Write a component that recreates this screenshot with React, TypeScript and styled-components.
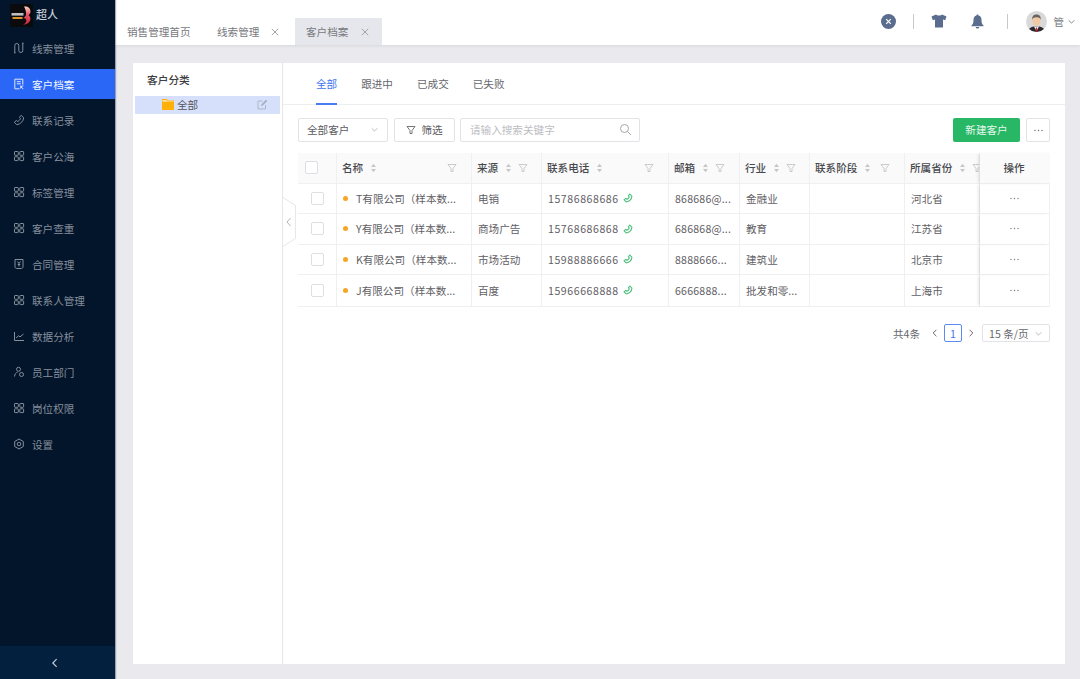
import React from "react";
import styled, { createGlobalStyle } from "styled-components";

const Global = createGlobalStyle`
  html, body { margin: 0; padding: 0; height: 100%; }
  body { font-family: "Noto Sans CJK SC", "Noto Sans", sans-serif; background: #e9e9ee; overflow: hidden; }
  * { box-sizing: border-box; }
`;

const Page = styled.div`display: flex; width: 1080px; height: 679px;`;
const Side = styled.aside`
  width: 115px; flex: none; background: #02152b; display: flex; flex-direction: column;
  box-shadow: 1px 0 1px rgba(60,70,90,.45); z-index: 3;
`;
const Brand = styled.div`display: flex; align-items: center; height: 33px; padding: 0 0 2px 10px; gap: 3px;`;
const BrandName = styled.span`color: #c9ced6; font-size: 11px; font-weight: 500; margin-bottom: 3px;`;
const Menu = styled.nav`flex: 1; display: flex; flex-direction: column; gap: 6px;`;
const MenuItem = styled.div<{ $active?: boolean }>`
  height: 30px; display: flex; align-items: center; padding-left: 13px; gap: 7px;
  font-size: 10.6px;
  color: ${p => (p.$active ? "#f2f6ff" : "#868f9b")};
  background: ${p => (p.$active ? "#2b67f6" : "transparent")};
  svg { flex: none; }
`;
const Collapse = styled.div`height: 33px; background: #04203f; display: flex; align-items: center; justify-content: center; padding-right: 5px;`;

const Main = styled.div`flex: 1; display: flex; flex-direction: column; min-width: 0;`;
const Header = styled.header`
  height: 45px; flex: none; background: #fff; display: flex; align-items: flex-end; padding-left: 1px;
  box-shadow: 0 1px 3px rgba(0,0,0,.08); position: relative; z-index: 2;
`;
const HeadTab = styled.div<{ $active?: boolean; $w: number }>`
  width: ${p => p.$w}px; height: 27px; display: flex; align-items: center; padding-left: 11px;
  font-size: 10.6px; color: #77797e; background: ${p => (p.$active ? "#e6e7ec" : "transparent")};
`;
const TabClose = styled.span<{ $r: number }>`margin-left: auto; margin-right: ${p => p.$r}px; display: flex;`;
const HeadRight = styled.div`margin-left: auto; height: 100%; display: flex; align-items: center; padding: 0 4px 3px 0;`;
const HeadSep = styled.i<{ $l: number }>`width: 1px; height: 15px; background: #c6c8cc; display: block; margin-left: ${p => p.$l}px;`;
const HeadIcon = styled.span<{ $l: number }>`display: flex; margin-left: ${p => p.$l}px;`;
const UserName = styled.span`font-size: 10.5px; color: #77797e; margin-left: 7px;`;

const Content = styled.main`flex: 1; padding: 18px 15px 15px 18px; display: flex; min-height: 0;`;
const Card = styled.section`flex: 1; background: #fff; display: flex; position: relative;`;
const Tree = styled.div`width: 150px; flex: none; border-right: 1px solid #e6e7eb; padding: 9px 2px 0;`;
const TreeTitle = styled.div`font-size: 10.7px; font-weight: 500; color: #3e3e42; padding-left: 12px; height: 16px; line-height: 16px;`;
const TreeRow = styled.div`
  margin-top: 8px; height: 18px; background: #d6e0fa; display: flex; align-items: center; padding: 0 12px 1px 27px;
  font-size: 10.6px; color: #55565b; gap: 3px;
`;
const EditWrap = styled.span`margin-left: auto; display: flex;`;
const Handle = styled.div`position: absolute; left: 150px; top: 134px; width: 14px; height: 50px; display: flex;`;

const Panel = styled.div`flex: 1; min-width: 0; display: flex; flex-direction: column;`;
const Tabs = styled.div`height: 42px; flex: none; border-bottom: 1px solid #eceef1; display: flex; padding-left: 33px; gap: 24px;`;
const PTab = styled.div<{ $active?: boolean }>`
  height: 42px; padding-top: 13px; font-size: 10.6px; line-height: 16px;
  color: ${p => (p.$active ? "#3e74f0" : "#66676c")};
  border-bottom: ${p => (p.$active ? "2px solid #4a7bf2" : "none")};
`;
const Body = styled.div`padding: 13px 15px 0; flex: 1;`;
const Toolbar = styled.div`display: flex; align-items: center; height: 24px; gap: 6px; width: 752px;`;
const Control = styled.div<{ $w: number }>`
  width: ${p => p.$w}px; height: 24px; border: 1px solid #e2e3e6; border-radius: 2px; background: #fff;
  display: flex; align-items: center; font-size: 10.6px; color: #5b5c61; padding-bottom: 1px;
`;
const SelectBox = styled(Control)`padding-left: 8px; padding-right: 8px; justify-content: space-between;`;
const FilterBtn = styled(Control)`justify-content: center; gap: 5px;`;
const SearchBox = styled(Control)`padding-left: 9px; padding-right: 7px; justify-content: space-between; color: #bcbdc1; margin-left: -1px;`;
const Green = styled.div`
  margin-left: auto; width: 67px; height: 24px; background: #27b765; color: #e6f7ee; border-radius: 2px; padding-bottom: 1px;
  display: flex; align-items: center; justify-content: center; font-size: 10.6px;
`;
const MoreBtn = styled(Control)`justify-content: center; padding-bottom: 0;`;

const Table = styled.div`
  margin-top: 11px; width: 752px; display: grid; grid-template-columns: 39px 135px 70px 127px 71px 70px 95px 75px 70px;
  grid-template-rows: 31px 30px 31px 30px 31px; border-bottom: 1px solid #eeeff1; border-right: 1px solid #f0f0f2;
`;
const HCell = styled.div<{ $sticky?: boolean; $center?: boolean; $check?: boolean }>`
  background: #fafafa; border-right: 1px solid #f0f0f2; border-bottom: 1px solid #f0f0f2;
  display: flex; align-items: center; padding: 0 14px 1px 5px; font-size: 10.6px; font-weight: 500; color: #48494e; overflow: hidden; white-space: nowrap;
  ${p => p.$center && "justify-content: center; padding: 0 2px 1px 0;"}
  ${p => p.$check && "padding-left: 7px;"}
  ${p => p.$sticky && "box-shadow: -3px 0 3px -1px rgba(0,0,0,.09); position: relative; border-right: none;"}
`;
const Cell = styled.div<{ $sticky?: boolean; $center?: boolean; $last?: boolean }>`
  border-right: 1px solid #f0f0f2; border-bottom: ${p => (p.$last ? "none" : "1px solid #f0f0f2")};
  display: flex; align-items: center; padding: 0 5px 1px 6px; font-size: 10.6px; color: #5f6065; white-space: nowrap; overflow: hidden;
  ${p => p.$center && "justify-content: center; padding: 0 0 1px;"}
  ${p => p.$sticky && "box-shadow: -3px 0 3px -1px rgba(0,0,0,.09); position: relative; border-right: none; padding-right: 2px;"}
`;
const Check = styled.span`width: 13px; height: 13px; border: 1px solid #dedfe3; border-radius: 2px; background: #fff; display: block; flex: none;`;
const Dot = styled.i`width: 5px; height: 5px; border-radius: 50%; background: #f5a623; margin: 0 8px 0 0; display: block; flex: none;`;
const Sort = styled.span`margin-left: 7px; display: flex; flex: none;`;
const Funnel = styled.span<{ $auto?: boolean }>`
  display: flex; flex: none; margin-left: ${p => (p.$auto ? "auto" : "6px")};
`;
const Digits = styled.span`letter-spacing: .55px;`;
const MailText = styled.span`letter-spacing: .2px;`;
const CallIcon = styled.span`display: flex; margin-left: 4px;`;
const Pager = styled.div`margin-top: 17px; display: flex; align-items: center; justify-content: flex-end; height: 18px; font-size: 10.6px; color: #66676c; width: 752px;`;
const PageNum = styled.div`
  width: 18px; height: 18px; border: 1px solid #5d8bf4; border-radius: 2px; color: #3e74f0;
  display: flex; align-items: center; justify-content: center; margin: 0 4px;
`;
const PageSize = styled.div`
  width: 68px; height: 18px; border: 1px solid #e2e3e6; border-radius: 2px; margin-left: 6px; padding: 0 6px;
  display: flex; align-items: center; justify-content: space-between;
`;
const Arrow = styled.span`display: flex; margin-left: 10px;`;
const ArrowR = styled.span`display: flex;`;

type P = { c?: string };
const S = { width: 12, height: 12, viewBox: "0 0 12 12", fill: "none", strokeWidth: 1 };
const PHONE = "M8.200 1.300 10.700 3.800C10.300 7.400 7.400 10.300 3.800 10.700L1.300 8.200 3.300 6.500 4.800 7.500C5.800 7 7 5.800 7.500 4.800L6.500 3.300Z";
const IcGrid = ({ c = "#868f9b" }: P) => (
  <svg {...S} stroke={c}><rect x="1.500" y="1.500" width="3.800" height="3.800" rx=".6"/><rect x="6.800" y="1.500" width="3.800" height="3.800" rx=".6"/><rect x="1.500" y="6.800" width="3.800" height="3.800" rx=".6"/><rect x="6.800" y="6.800" width="3.800" height="3.800" rx=".6"/></svg>
);
const IcRoute = ({ c = "#868f9b" }: P) => (
  <svg {...S} stroke={c}><path d="M1.800 10.800V3.500a2 2 0 0 1 4 0V8.500a2 2 0 0 0 4 0V1.200"/><path d="M1 10.800h1.600M9 1.200h1.600"/></svg>
);
const IcBook = ({ c = "#868f9b" }: P) => (
  <svg {...S} stroke={c}><path d="M6.500 10.800H1.800V1.200h8V6.500"/><path d="M3.800 3.700h4M3.800 5.800h4M7.800 7.500v3M7.800 9l2.500-1.500M7.800 9l2.500 1.800"/></svg>
);
const IcPhone = ({ c = "#868f9b" }: P) => <svg {...S} stroke={c}><path d={PHONE}/></svg>;
const IcContract = ({ c = "#868f9b" }: P) => (
  <svg {...S} stroke={c}><path d="M2 1.500h8v7.200c0 1-.7 1.800-1.700 1.800H3.700C2.700 10.500 2 9.700 2 8.700z"/><path d="M4.500 3.500 6 5.500l1.500-2M6 5.500V8.500M4.700 6.500h2.600"/></svg>
);
const IcChart = ({ c = "#868f9b" }: P) => (
  <svg {...S} stroke={c}><path d="M1.500 2v8.500H11"/><path d="M3.200 8l2.300-2.300 1.500 1.200L10.500 4"/></svg>
);
const IcUsers = ({ c = "#868f9b" }: P) => (
  <svg {...S} stroke={c}><circle cx="5.500" cy="3.300" r="2"/><path d="M1.500 10.500c.3-2.500 1.500-4 3-4.300"/><circle cx="8.500" cy="8.500" r="2"/></svg>
);
const IcGear = ({ c = "#868f9b" }: P) => (
  <svg {...S} stroke={c}><path d="M6 1l4.300 2.500v5L6 11 1.700 8.500v-5z"/><circle cx="6" cy="6" r="1.800"/></svg>
);
const Chev = ({ dir = "down", c = "#b5b6ba", s = 9 }: { dir?: string; c?: string; s?: number }) => {
  const d = dir === "down" ? "M2 4l3.500 3.500L9 4" : dir === "left" ? "M7 2 3.500 5.500 7 9" : "M4 2l3.500 3.500L4 9";
  return <svg width={s} height={s} viewBox="0 0 11 11" fill="none" stroke={c} strokeWidth="1.100"><path d={d}/></svg>;
};
const X = () => <svg width="8" height="8" viewBox="0 0 8 8" stroke="#9a9ca2" strokeWidth=".9"><path d="M.8.8l6.400 6.400M7.200.8.8 7.200"/></svg>;
const FunnelIc = ({ c = "#c4c5c9" }: P) => <svg width="10" height="10" viewBox="0 0 10 10" fill="none" stroke={c} strokeWidth=".9"><path d="M1 1.500h8L6 5.500v3H4v-3z"/></svg>;
const SortIc = () => <svg width="7" height="10" viewBox="0 0 7 10" fill="#c6c7cb"><path d="M3.500.8 6 4H1zM3.500 9.200 1 6h5z"/></svg>;
const Dots = ({ c = "#66676c" }: P) => <svg width="9" height="3" viewBox="0 0 9 3" fill={c}><circle cx="1" cy="1.500" r=".7"/><circle cx="4.500" cy="1.500" r=".7"/><circle cx="8" cy="1.500" r=".7"/></svg>;
const PhoneG = () => <svg width="10" height="10" viewBox="0 0 12 12" fill="none" stroke="#4cbf7c" strokeWidth="1.300"><path d={PHONE}/></svg>;
const Logo = () => (
  <svg width="23" height="23" viewBox="0 0 23 23">
    <defs>
      <linearGradient id="lg" x1="0" y1="0" x2="0" y2="1"><stop offset="0" stopColor="#f7d8c4"/><stop offset=".45" stopColor="#e8556a"/><stop offset="1" stopColor="#c9243a"/></linearGradient>
    </defs>
    <rect width="23" height="23" fill="#0b0a0d"/>
    <rect x="1.500" y="9" width="12" height="2.600" fill="#bdbdbd"/>
    <rect x="2.500" y="13" width="10" height="2" fill="#d9932b"/>
    <path d="M14 2.500c3.500-.5 6.500 1.500 6.500 5 0 2-1 3-2 3.700 1.500 1 2.300 2.500 1.800 4.500-.7 3-3.700 5-7.300 4.800 2.500-1 3.700-2.700 3.300-4.500-.3-1.300-1.500-2-3-2 1.500-1 3-2.400 2.800-4.500C16 7 15.300 5 14 2.500z" fill="url(#lg)"/>
  </svg>
);
const Avatar = () => (
  <svg width="21" height="21" viewBox="0 0 21 21">
    <defs><clipPath id="av"><circle cx="10.500" cy="10.500" r="10.500"/></clipPath></defs>
    <g clipPath="url(#av)">
      <rect width="21" height="21" fill="#d9d9d9"/>
      <path d="M2 21c.5-4 3-5 6-5.500h5c3 .5 5.500 1.500 6 5.500z" fill="#2a2a2e"/>
      <path d="M8 15.500h5L10.500 20z" fill="#f4f4f4"/>
      <path d="M10 16.500h1l.4 4.500h-1.800z" fill="#c8202c"/>
      <ellipse cx="10.500" cy="9.500" rx="4" ry="5.200" fill="#f2c9a5"/>
      <path d="M6.300 9c-.5-4 1.500-5.500 4.200-5.500s4.700 1.500 4.200 5.500c-.4-2-1.200-2.800-4.200-2.800S6.700 7 6.300 9z" fill="#6a6460"/>
    </g>
  </svg>
);
const Shirt = () => <svg width="16" height="14" viewBox="0 0 16 14" fill="#5a6d8f"><path d="M5 .5C6 1.800 10 1.800 11 .5l4.500 2-1.300 3.800-2.200-.8V13.500H4V5.500l-2.200.8L.5 2.500z"/></svg>;
const Bell = () => <svg width="13" height="15" viewBox="0 0 13 15" fill="#5a6d8f"><path d="M6.500.5c.6 0 1 .4 1 1 2 .5 3 2 3 4.500 0 3 .7 4.200 2 5.500v.7H.5v-.7c1.300-1.300 2-2.500 2-5.500 0-2.500 1-4 3-4.500 0-.6.400-1 1-1zM4.800 13h3.400c0 1-.8 1.500-1.700 1.500S4.800 14 4.800 13z"/></svg>;
const CloseCircle = () => <svg width="15" height="15" viewBox="0 0 15 15"><circle cx="7.500" cy="7.500" r="7.500" fill="#5a6d8f"/><path d="M5.200 5.200l4.600 4.600M9.800 5.200l-4.600 4.600" stroke="#fff" strokeWidth="1.200"/></svg>;
const Search = () => <svg width="13" height="13" viewBox="0 0 13 13" fill="none" stroke="#a5a6aa" strokeWidth="1"><circle cx="5.500" cy="5.500" r="4"/><path d="M8.500 8.500l3.500 3.500"/></svg>;
const Edit = () => <svg width="11" height="11" viewBox="0 0 11 11" fill="none" stroke="#b0b6c8" strokeWidth="1"><path d="M8.500 6v4H1V2h4.500"/><path d="M4.500 6.500 5 5l4-4 1 1-4 4z" fill="#b0b6c8"/></svg>;
const Folder = () => <svg width="12" height="11" viewBox="0 0 12 11"><path d="M0 0h5l1 1.500h6V11H0z" fill="#ffb10a"/><path d="M.6 1h4.300l.7 1.200H11.400v.5H.6z" fill="#ffe3a8"/></svg>;
const HandleShape = () => (
  <svg width="14" height="50" viewBox="0 0 14 50" fill="#fff" stroke="#e6e7eb"><path d="M0 .5 12.500 8.500V41.500L0 49.500"/><path d="M7.500 21 4 25l3.500 4" fill="none" stroke="#b5b6ba"/></svg>
);

const menu: [string, React.FC<P>][] = [
  ["线索管理", IcRoute], ["客户档案", IcBook], ["联系记录", IcPhone], ["客户公海", IcGrid], ["标签管理", IcGrid], ["客户查重", IcGrid],
  ["合同管理", IcContract], ["联系人管理", IcGrid], ["数据分析", IcChart], ["员工部门", IcUsers], ["岗位权限", IcGrid], ["设置", IcGear],
];
const rows = [
  ["T有限公司（样本数...", "电销", "15786868686", "868686@...", "金融业", "", "河北省"],
  ["Y有限公司（样本数...", "商场广告", "15768686868", "686868@...", "教育", "", "江苏省"],
  ["K有限公司（样本数...", "市场活动", "15988886666", "8888666...", "建筑业", "", "北京市"],
  ["J有限公司（样本数...", "百度", "15966668888", "6666888...", "批发和零...", "", "上海市"],
];

export default function App() {
  return (
    <Page>
      <Global />
      <Side>
        <Brand><Logo /><BrandName>超人</BrandName></Brand>
        <Menu>
          {menu.map(([t, I], i) => (
            <MenuItem key={t} $active={i === 1}><I c={i === 1 ? "#dce6ff" : "#868f9b"} />{t}</MenuItem>
          ))}
        </Menu>
        <Collapse><Chev dir="left" c="#c3cad6" s={12} /></Collapse>
      </Side>
      <Main>
        <Header>
          <HeadTab $w={90}>销售管理首页</HeadTab>
          <HeadTab $w={89}>线索管理<TabClose $r={16}><X /></TabClose></HeadTab>
          <HeadTab $active $w={87}>客户档案<TabClose $r={13}><X /></TabClose></HeadTab>
          <HeadRight>
            <CloseCircle />
            <HeadSep $l={17} />
            <HeadIcon $l={17}><Shirt /></HeadIcon>
            <HeadIcon $l={24}><Bell /></HeadIcon>
            <HeadSep $l={23} />
            <HeadIcon $l={18}><Avatar /></HeadIcon>
            <UserName>管</UserName>
            <HeadIcon $l={3}><Chev c="#77797e" /></HeadIcon>
          </HeadRight>
        </Header>
        <Content>
          <Card>
            <Tree>
              <TreeTitle>客户分类</TreeTitle>
              <TreeRow><Folder />全部<EditWrap><Edit /></EditWrap></TreeRow>
            </Tree>
            <Handle><HandleShape /></Handle>
            <Panel>
              <Tabs>
                <PTab $active>全部</PTab><PTab>跟进中</PTab><PTab>已成交</PTab><PTab>已失败</PTab>
              </Tabs>
              <Body>
                <Toolbar>
                  <SelectBox $w={90}>全部客户<Chev /></SelectBox>
                  <FilterBtn $w={61}><FunnelIc c="#66676c" />筛选</FilterBtn>
                  <SearchBox $w={180}>请输入搜索关键字<Search /></SearchBox>
                  <Green>新建客户</Green>
                  <MoreBtn $w={24}><Dots /></MoreBtn>
                </Toolbar>
                <Table>
                  <HCell $check><Check /></HCell>
                  <HCell>名称<Sort><SortIc /></Sort><Funnel $auto><FunnelIc /></Funnel></HCell>
                  <HCell>来源<Sort><SortIc /></Sort><Funnel><FunnelIc /></Funnel></HCell>
                  <HCell>联系电话<Sort><SortIc /></Sort><Funnel $auto><FunnelIc /></Funnel></HCell>
                  <HCell>邮箱<Sort><SortIc /></Sort><Funnel><FunnelIc /></Funnel></HCell>
                  <HCell>行业<Sort><SortIc /></Sort><Funnel><FunnelIc /></Funnel></HCell>
                  <HCell>联系阶段<Sort><SortIc /></Sort><Funnel $auto><FunnelIc /></Funnel></HCell>
                  <HCell>所属省份<Sort><SortIc /></Sort><Funnel><FunnelIc /></Funnel></HCell>
                  <HCell $sticky $center>操作</HCell>
                  {rows.map((r, i) => {
                    const last = i === rows.length - 1;
                    return (
                      <React.Fragment key={r[0]}>
                        <Cell $last={last} $center><Check /></Cell>
                        <Cell $last={last}><Dot />{r[0]}</Cell>
                        <Cell $last={last}>{r[1]}</Cell>
                        <Cell $last={last}><Digits>{r[2]}</Digits><CallIcon><PhoneG /></CallIcon></Cell>
                        <Cell $last={last}><MailText>{r[3]}</MailText></Cell>
                        <Cell $last={last}>{r[4]}</Cell>
                        <Cell $last={last}>{r[5]}</Cell>
                        <Cell $last={last}>{r[6]}</Cell>
                        <Cell $last={last} $sticky $center><Dots c="#77797e" /></Cell>
                      </React.Fragment>
                    );
                  })}
                </Table>
                <Pager>
                  共4条
                  <Arrow><Chev dir="left" c="#66676c" s={10} /></Arrow>
                  <PageNum>1</PageNum>
                  <ArrowR><Chev dir="right" c="#66676c" s={10} /></ArrowR>
                  <PageSize>15 条/页<Chev /></PageSize>
                </Pager>
              </Body>
            </Panel>
          </Card>
        </Content>
      </Main>
    </Page>
  );
}
